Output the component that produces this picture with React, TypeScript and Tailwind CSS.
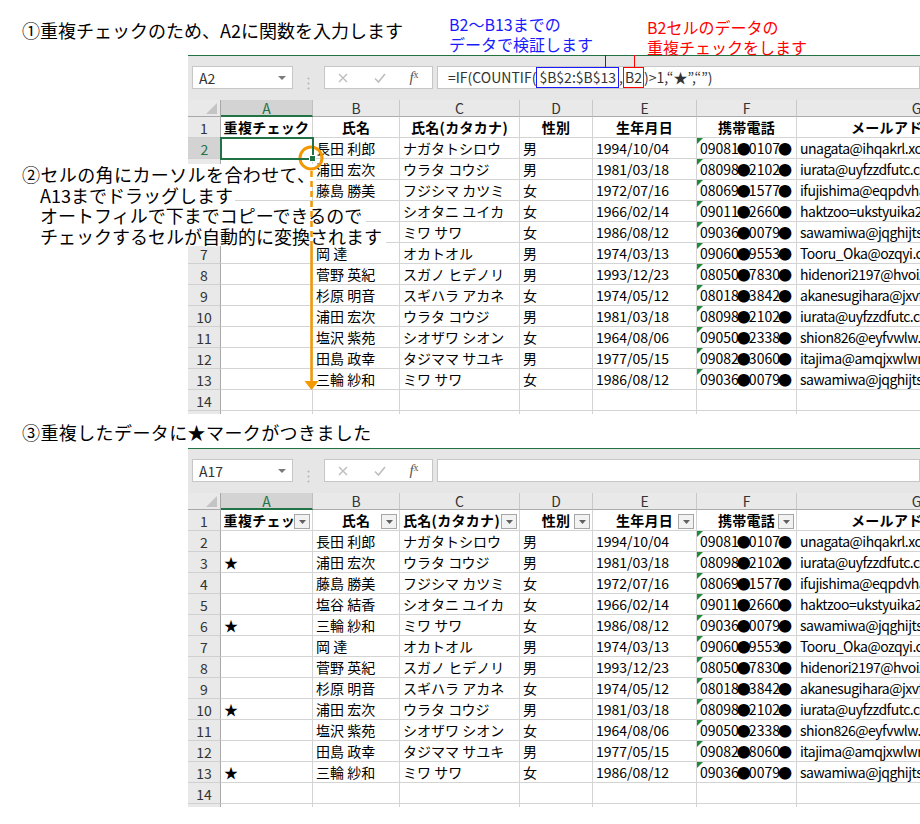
import React from 'react';

type Row = [string, string, string, string, string, string];

const base: Row[] = [
  ['長田 利郎', 'ナガタトシロウ', '男', '1994/10/04', '09081●0107●', 'unagata@ihqakrl.xd'],
  ['浦田 宏次', 'ウラタ コウジ', '男', '1981/03/18', '08098●2102●', 'iurata@uyfzzdfutc.co.jp'],
  ['藤島 勝美', 'フジシマ カツミ', '女', '1972/07/16', '08069●1577●', 'ifujishima@eqpdvha_.jp'],
  ['塩谷 結香', 'シオタニ ユイカ', '女', '1966/02/14', '09011●2660●', 'haktzoo=ukstyuika2@xx.jp'],
  ['三輪 紗和', 'ミワ サワ', '女', '1986/08/12', '09036●0079●', 'sawamiwa@jqghijtsw.com'],
  ['岡 達', 'オカトオル', '男', '1974/03/13', '09060●9553●', 'Tooru_Oka@ozqyi.com'],
  ['菅野 英紀', 'スガノ ヒデノリ', '男', '1993/12/23', '08050●7830●', 'hidenori2197@hvoiz.jp'],
  ['杉原 明音', 'スギハラ アカネ', '女', '1974/05/12', '08018●3842●', 'akanesugihara@jxvf.jp'],
  ['浦田 宏次', 'ウラタ コウジ', '男', '1981/03/18', '08098●2102●', 'iurata@uyfzzdfutc.co.jp'],
  ['塩沢 紫苑', 'シオザワ シオン', '女', '1964/08/06', '09050●2338●', 'shion826@eyfvwlw.jp'],
  ['田島 政幸', 'タジママ サユキ', '男', '1977/05/15', '09082●3060●', 'itajima@amqjxwlwr.net'],
  ['三輪 紗和', 'ミワ サワ', '女', '1986/08/12', '09036●0079●', 'sawamiwa@jqghijtsw.com'],
];

// top sheet: B5 / B6 sit under the annotation
const topRows: Row[] = base.map((r, i) => (i === 3 || i === 4 ? ['', ...r.slice(1)] as Row : r));
const bottomRows: Row[] = base.map((r, i) => (i === 10 ? [r[0], r[1], r[2], r[3], '09082●8060●', r[5]] : r));

const letters = ['A', 'B', 'C', 'D', 'E', 'F', 'G'];
const heads = ['重複チェック', '氏名', '氏名(カタカナ)', '性別', '生年月日', '携帯電話', 'メールアドレス'];

function Phone({ v }: { v: string }) {
  const parts = v.split('●');
  return (
    <>
      {parts.map((p, i) => (
        <React.Fragment key={i}>
          {p}
          {i < parts.length - 1 && <span className="-mx-[2px]">●</span>}
        </React.Fragment>
      ))}
    </>
  );
}

function FilterBtn() {
  return (
    <span className="absolute right-[2px] bottom-[1px] w-[16px] h-[15px] border border-[#a6a6a6] bg-[#f2f2f2] flex items-center justify-center">
      <svg width="7" height="4" viewBox="0 0 7 4">
        <path d="M0 0h7L3.5 4z" fill="#606060" />
      </svg>
    </span>
  );
}

function FormulaBar({ name, formula }: { name: string; formula?: boolean }) {
  return (
    <div className="h-[45px] bg-[#e6e6e6] border-t border-[#217346] pt-[10px] pl-[4px] flex">
      <div className="w-[101px] h-[23px] bg-white border border-[#c6c6c6] flex items-center justify-between pl-[6px] pr-[6px]">
        <span className="text-[14px] text-[#333] leading-none">{name}</span>
        <svg width="8" height="4" viewBox="0 0 8 4">
          <path d="M0 0h8L4 4z" fill="#7a7a7a" />
        </svg>
      </div>
      <div className="w-[31px] flex items-center justify-center">
        <svg width="3" height="13" viewBox="0 0 3 13">
          <circle cx="1.5" cy="1.5" r="1" fill="#b5b5b5" />
          <circle cx="1.5" cy="6.5" r="1" fill="#b5b5b5" />
          <circle cx="1.5" cy="11.5" r="1" fill="#b5b5b5" />
        </svg>
      </div>
      <div className="w-[109px] h-[23px] bg-white border border-[#c6c6c6] flex items-center">
        <span className="w-[36px] flex justify-center">
          <svg width="10" height="10" viewBox="0 0 10 10">
            <path d="M1 1l8 8M9 1l-8 8" stroke="#bdbdbd" strokeWidth="1.4" />
          </svg>
        </span>
        <span className="w-[38px] flex justify-center">
          <svg width="12" height="10" viewBox="0 0 12 10">
            <path d="M1 5.5l3.5 3.5L11 1" stroke="#bdbdbd" strokeWidth="1.6" fill="none" />
          </svg>
        </span>
        <span className="w-[30px] flex justify-center font-['Liberation_Serif',serif] italic text-[15px] text-[#555] leading-none">
          f<span className="text-[10px] not-italic">x</span>
        </span>
      </div>
      <div className="ml-[4px] flex-1 h-[23px] bg-white border border-[#c6c6c6] flex items-stretch pl-[10px] text-[14px] text-[#333] whitespace-nowrap">
        {formula && (
          <>
            <span className="flex items-center">=IF(COUNTIF(</span>
            <span className="relative flex items-center border border-[#1a1aff] px-[2px]">
              $B$2:$B$13
              <span className="absolute bottom-full right-[12px] w-[8px] h-[25px] border-t border-r border-[#1a1aff]" />
            </span>
            <span className="flex items-center">,</span>
            <span className="relative flex items-center border border-[#ff0000] px-[1px]">
              B2
              <span className="absolute bottom-full left-[10px] w-[9px] h-[25px] border-t border-l border-[#ff0000]" />
            </span>
            <span className="flex items-center">)&gt;1,“★”,“”)</span>
          </>
        )}
      </div>
    </div>
  );
}

function Sheet({ name, formula, rows, filter, stars, selected }: {
  name: string;
  formula?: boolean;
  rows: Row[];
  filter?: boolean;
  stars?: number[];
  selected?: boolean;
}) {
  const cell = 'h-[21px] border-r border-b border-[#d4d4d4] bg-white text-[14px] leading-[21px] pl-[3px] whitespace-nowrap overflow-hidden';
  const rh = 'h-[21px] bg-[#e9e9e9] border-r border-r-[#a8a8a8] border-b border-b-[#d0d0d0] text-[14px] leading-[22px] text-center text-[#333]';
  return (
    <div className="ml-[188px] w-[732px] overflow-hidden">
      <FormulaBar name={name} formula={formula} />
      <div className="grid grid-cols-[33px_92px_87px_120px_73px_104px_100px_240px]">
        <div className="h-[17px] bg-[#e9e9e9] border-r border-b border-[#a8a8a8] flex items-end justify-end pr-[3px] pb-[2px]">
          <svg width="11" height="11" viewBox="0 0 11 11">
            <path d="M11 0v11H0z" fill="#c4c4c4" />
          </svg>
        </div>
        {letters.map((l, i) =>
          i === 0 ? (
            <div key={l} className="h-[17px] bg-[#d3d3d3] border-r border-[#c0c0c0] border-b-2 border-b-[#217346] text-[14px] leading-[17px] text-center text-[#217346]">
              {l}
            </div>
          ) : (
            <div key={l} className="h-[17px] bg-[#e9e9e9] border-r border-[#c8c8c8] border-b border-b-[#ababab] text-[14px] leading-[17px] text-center text-[#333]">
              {l}
            </div>
          )
        )}

        <div className={rh}>1</div>
        {heads.map((h, i) => (
          <div
            key={h}
            className={`relative h-[21px] border-r border-b border-[#d4d4d4] bg-white text-[14px] leading-[21px] font-bold whitespace-nowrap overflow-hidden tracking-[0.3px] ${i === 6 ? 'pl-[54px]' : i === 2 && filter ? 'pl-[3px]' : 'text-center'}`}
          >
            {h}
            {filter && i < 6 && <FilterBtn />}
          </div>
        ))}

        {rows.map((r, i) => {
          const n = i + 2;
          const sel = selected && n === 2;
          return (
            <React.Fragment key={n}>
              <div className={sel ? 'h-[21px] bg-[#d3d3d3] border-b border-b-[#d0d0d0] text-[14px] leading-[22px] text-center text-[#217346]' : rh}>{n}</div>
              <div className="relative h-[21px] border-r border-b border-[#d4d4d4] bg-white text-[14px] leading-[21px] pl-[3px] whitespace-nowrap">
                {stars?.includes(n) ? '★' : ''}
                {sel && (
                  <>
                    <span className="absolute -left-[1px] -top-[1px] w-[94px] h-[23px] border-2 border-[#217346] z-10" />
                    <span className="absolute -right-[4px] -bottom-[4px] w-[7px] h-[7px] bg-[#217346] border border-white z-20" />
                  </>
                )}
              </div>
              <div className={cell}>{r[0]}</div>
              <div className={cell}>{r[1]}</div>
              <div className={cell}>{r[2]}</div>
              <div className={cell}>{r[3]}</div>
              <div className={`relative ${cell}`}>
                <span className="absolute left-0 top-0 w-0 h-0 border-t-[6px] border-t-[#1f8a3a] border-r-[6px] border-r-transparent" />
                <Phone v={r[4]} />
              </div>
              <div className={`${cell} tracking-[-0.5px]`}>{r[5]}</div>
            </React.Fragment>
          );
        })}

        <div className={rh}>14</div>
        {letters.map(l => (
          <div key={l} className={cell} />
        ))}
        <div className="h-[3px] bg-[#e9e9e9] border-r border-[#a8a8a8]" />
        {letters.map(l => (
          <div key={l} className="h-[3px] border-r border-[#d4d4d4]" />
        ))}
      </div>
    </div>
  );
}

export default function App() {
  return (
    <div className="relative w-[920px] h-[824px] bg-white text-black overflow-hidden font-['Noto_Sans_CJK_JP','Noto_Sans',sans-serif]">
      <div className="h-[55px] pl-[22px] pt-[19px] text-[18px] leading-[22px]">①重複チェックのため、A2に関数を入力します</div>
      <Sheet name="A2" formula rows={topRows} selected />
      <div className="h-[34px] pl-[22px] pt-[7px] text-[18px] leading-[22px] tracking-[0.4px]">③重複したデータに★マークがつきました</div>
      <Sheet name="A17" rows={bottomRows} filter stars={[3, 6, 10, 13]} />

      {/* callouts above the formula bar */}
      <div className="absolute left-[449px] top-[14px] text-[16px] leading-[20px] text-[#1a1aff]">
        <div>B2～B13までの</div>
        <div>データで検証します</div>
      </div>
      <div className="absolute left-[647px] top-[17px] text-[16px] leading-[20px] text-[#ff0000]">
        <div>B2セルのデータの</div>
        <div>重複チェックをします</div>
      </div>

      {/* step 2 note over the sheet */}
      <div className="absolute left-[22px] top-[164px] text-[18px] leading-[20.5px] [text-shadow:0_0_3px_#fff,0_0_3px_#fff,0_0_3px_#fff]">
        <div className="w-fit bg-white tracking-[0.4px]">②セルの角にカーソルを合わせて、</div>
        <div className="w-fit bg-white pl-[18px] pr-[2px]">A13までドラッグします</div>
        <div className="w-fit bg-white pl-[18px] pr-[4px]">オートフィルで下までコピーできるので</div>
        <div className="w-fit bg-white pl-[18px] pr-[4px]">チェックするセルが自動的に変換されます</div>
      </div>

      <svg className="absolute left-[290px] top-[140px]" width="40" height="255" viewBox="0 0 40 255">
        <circle cx="21" cy="18" r="11" fill="none" stroke="#f39800" strokeWidth="3" />
        <path d="M21.5 31V105" stroke="#f39800" strokeWidth="2.5" strokeDasharray="6 4" />
        <path d="M21.5 105V242" stroke="#f39800" strokeWidth="2.5" />
        <path d="M14.5 241h14L21.5 250z" fill="#f39800" />
      </svg>
    </div>
  );
}
